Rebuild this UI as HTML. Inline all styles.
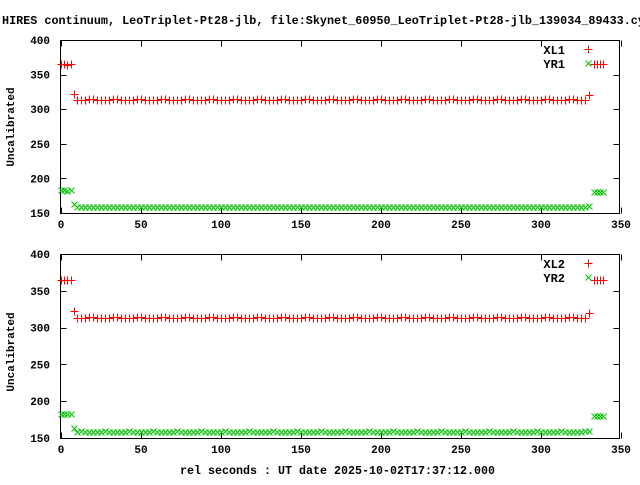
<!DOCTYPE html>
<html><head><meta charset="utf-8"><style>
body{margin:0;background:#fff;width:640px;height:480px;overflow:hidden}
svg text{font-family:"Liberation Mono",monospace;font-weight:bold;font-size:11px;fill:#000}
svg text.b{font-size:12px}
</style></head><body>
<svg id="s" width="640" height="480" xmlns="http://www.w3.org/2000/svg">
<text class="b" x="2" y="24" textLength="650" lengthAdjust="spacingAndGlyphs">HIRES continuum, LeoTriplet-Pt28-jlb, file:Skynet_60950_LeoTriplet-Pt28-jlb_139034_89433.cyl</text>
<text class="b" x="180" y="474" textLength="315" lengthAdjust="spacingAndGlyphs">rel seconds : UT date 2025-10-02T17:37:12.000</text>
<text transform="translate(14,127) rotate(-90)" text-anchor="middle">Uncalibrated</text>
<text transform="translate(14,352) rotate(-90)" text-anchor="middle">Uncalibrated</text>
<g id="g"></g>
</svg>
<script>
var g=document.getElementById('g'),h='';
function plot(top,bot,l1,l2){
 var L=60.5,R=619.5,T=top+0.5,B=bot+0.5;
 function X(v){return 61+v*1.6}
 function Y(v){return bot-(v-150)*(bot-top)/250}
 h+='<rect x="'+L+'" y="'+T+'" width="'+(R-L)+'" height="'+(B-T)+'" fill="none" stroke="#000"/>';
 for(var v=0;v<=350;v+=50){var x=Math.round(X(v))+0.5;
  h+='<path d="M'+x+' '+B+'v-6M'+x+' '+T+'v6" stroke="#000"/>';
  h+='<text x="'+X(v)+'" y="'+(bot+15)+'" text-anchor="middle">'+v+'</text>';}
 for(var v=150;v<=400;v+=50){var y=Math.round(Y(v))+0.5;
  h+='<path d="M'+L+' '+y+'h6M'+R+' '+y+'h-6" stroke="#000"/>';
  h+='<text x="50" y="'+(Y(v)+4)+'" text-anchor="end">'+v+'</text>';}
 function plus(x,y){h+='<path d="M'+(x-4)+' '+y+'h8M'+x+' '+(y-4)+'v8" stroke="#f00"/>'}
 function cross(x,y){h+='<path d="M'+(x-3)+' '+(y-3)+'l6 6M'+(x-3)+' '+(y+3)+'l6 -6" stroke="#00c000"/>'}
 var r=[[0,365],[2,365],[4,364],[6,365],[8,322]],gg=[[0,183],[2,183],[4,182],[6,183],[8,163]];
 for(var t=10;t<=328;t+=2.5){r.push([t,313+((t*7)%3>1.8?2:0)]);gg.push([t,158+((t*5)%3>2?1:0)]);}
 r.push([330,320]);gg.push([330,160]);
 [333,335,337,339].forEach(function(t){r.push([t,365]);gg.push([t,180])});
 r.forEach(function(p){plus(Math.round(X(p[0]))+0.5,Math.round(Y(p[1]))+0.5)});
 gg.forEach(function(p){cross(Math.round(X(p[0]))+0.5,Math.round(Y(p[1]))+0.5)});
 h+='<text class="b" x="565" y="'+(top+14)+'" text-anchor="end">'+l1+'</text><text class="b" x="565" y="'+(top+28)+'" text-anchor="end">'+l2+'</text>';
 plus(588.5,top+9.5);cross(588.5,top+23.5);
}
plot(40,213,'XL1','YR1');plot(254,438,'XL2','YR2');
g.innerHTML=h;
</script>
</body></html>
